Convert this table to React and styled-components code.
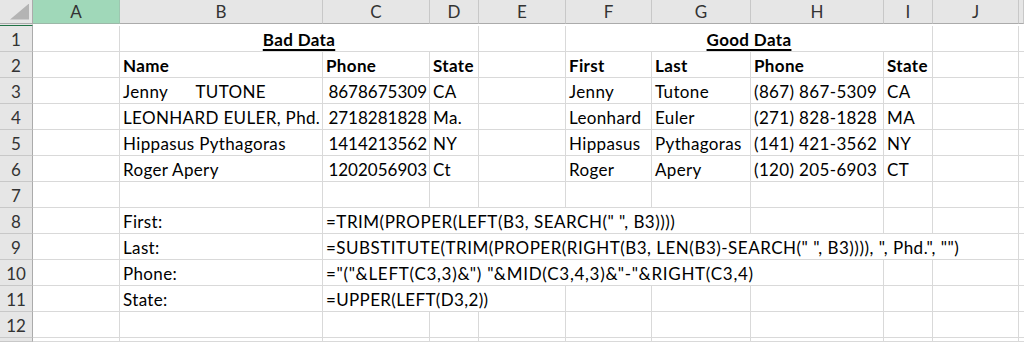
import React from "react";
import styled, { createGlobalStyle } from "styled-components";

const TEMPLATE =
  "33px 87px 203px 107px 49px 87px 86px 99px 133px 49px 86px 1fr";
const LETTERS = ["A", "B", "C", "D", "E", "F", "G", "H", "I", "J", ""];
const FONT = `Lato, "Open Sans", "Liberation Sans", sans-serif`;

const GlobalStyle = createGlobalStyle`
  html, body {
    margin: 0;
    padding: 0;
    overflow: hidden;
    background: #ffffff;
  }
  body {
    font-family: ${FONT};
  }
`;

// one entry per cell after the row number; span = columns covered,
// track = letter spacing so the formula runs as far as in the sheet
const ROWS = [
  [
    {},
    { text: "Bad Data", span: 3, align: "center", bold: true, under: true },
    {},
    { text: "Good Data", span: 4, align: "center", bold: true, under: true },
    {},
    {},
  ],
  [
    {},
    { text: "Name", bold: true },
    { text: "Phone", bold: true },
    { text: "State", bold: true },
    {},
    { text: "First", bold: true },
    { text: "Last", bold: true },
    { text: "Phone", bold: true },
    { text: "State", bold: true },
    {},
    {},
  ],
  [
    {},
    { text: "Jenny      TUTONE" },
    { text: "8678675309", align: "right" },
    { text: "CA" },
    {},
    { text: "Jenny" },
    { text: "Tutone" },
    { text: "(867) 867-5309" },
    { text: "CA" },
    {},
    {},
  ],
  [
    {},
    { text: "LEONHARD EULER, Phd." },
    { text: "2718281828", align: "right" },
    { text: "Ma." },
    {},
    { text: "Leonhard" },
    { text: "Euler" },
    { text: "(271) 828-1828" },
    { text: "MA" },
    {},
    {},
  ],
  [
    {},
    { text: "Hippasus Pythagoras" },
    { text: "1414213562", align: "right" },
    { text: "NY" },
    {},
    { text: "Hippasus" },
    { text: "Pythagoras" },
    { text: "(141) 421-3562" },
    { text: "NY" },
    {},
    {},
  ],
  [
    {},
    { text: "Roger Apery" },
    { text: "1202056903", align: "right" },
    { text: "Ct" },
    {},
    { text: "Roger" },
    { text: "Apery" },
    { text: "(120) 205-6903" },
    { text: "CT" },
    {},
    {},
  ],
  [{}, {}, {}, {}, {}, {}, {}, {}, {}, {}, {}],
  [
    {},
    { text: "First:" },
    {
      text: '=TRIM(PROPER(LEFT(B3, SEARCH(" ", B3))))',
      span: 5,
      track: 0.5,
    },
    {},
    {},
    {},
    {},
  ],
  [
    {},
    { text: "Last:" },
    {
      text: '=SUBSTITUTE(TRIM(PROPER(RIGHT(B3, LEN(B3)-SEARCH(" ", B3)))), ", Phd.", "")',
      span: 8,
      track: 0.5,
    },
    {},
  ],
  [
    {},
    { text: "Phone:" },
    {
      text: '="("&LEFT(C3,3)&") "&MID(C3,4,3)&"-"&RIGHT(C3,4)',
      span: 6,
      track: 0.72,
    },
    {},
    {},
    {},
  ],
  [
    {},
    { text: "State:" },
    { text: "=UPPER(LEFT(D3,2))", span: 3 },
    {},
    {},
    {},
    {},
    {},
    {},
  ],
  [{}, {}, {}, {}, {}, {}, {}, {}, {}, {}, {}],
];

const EMPTY = Array.from({ length: 11 }, () => ({}));

export default function App() {
  return (
    <>
      <GlobalStyle />
      <Sheet>
        <Row>
          <Corner />
          {LETTERS.map((l, i) => (
            <ColHead key={i} $selected={l === "A"}>
              {l}
            </ColHead>
          ))}
          <ColHead $edge />
        </Row>
        {ROWS.map((cells, r) => (
          <Row key={r}>
            <RowHead>{r + 1}</RowHead>
            {cells.map((c, i) => (
              <Cell
                key={i}
                $span={c.span || 1}
                $align={c.align || "left"}
                $bold={c.bold}
                $track={c.track}
              >
                {c.under ? <Underlined>{c.text}</Underlined> : c.text}
              </Cell>
            ))}
          </Row>
        ))}
        {/* top sliver of row 13 */}
        <Row $stub>
          <RowHead />
          {EMPTY.map((c, i) => (
            <Cell key={i} $span={1} />
          ))}
        </Row>
      </Sheet>
    </>
  );
}

const Sheet = styled.div`
  width: 1024px;
  height: 342px;
  overflow: hidden;
  background: #fff;
`;

const Row = styled.div`
  display: grid;
  grid-template-columns: ${TEMPLATE};
  height: ${(p) => (p.$stub ? "4px" : "26px")};
`;

const Corner = styled.div`
  position: relative;
  background: #e6e6e6;
  border-right: 1px solid #ababab;
  border-bottom: 1px solid #ababab;

  &::after {
    content: "";
    position: absolute;
    right: 3px;
    bottom: 3px;
    width: 19px;
    height: 16px;
    background: #b4b4b4;
    clip-path: polygon(100% 0, 100% 100%, 0 100%);
  }
`;

const ColHead = styled.div`
  display: flex;
  align-items: center;
  justify-content: center;
  padding-top: 1px;
  background: ${(p) => (p.$selected ? "#a0d8b9" : "#e6e6e6")};
  border-right: 1px solid ${(p) => (p.$selected ? "#9dc7b0" : "#c8c8c8")};
  border-bottom: 1px solid
    ${(p) => (p.$edge ? "#217346" : p.$selected ? "#9cb8a8" : "#ababab")};
  color: #333;
  font-size: 17px;
  box-sizing: border-box;
`;

const RowHead = styled.div`
  display: flex;
  align-items: center;
  justify-content: center;
  padding-top: 1px;
  background: #e6e6e6;
  border-right: 1px solid #ababab;
  border-bottom: 1px solid #c8c8c8;
  color: #333;
  font-size: 17px;
  box-sizing: border-box;
`;

const Cell = styled.div`
  grid-column: span ${(p) => p.$span};
  display: flex;
  align-items: flex-end;
  justify-content: ${(p) =>
    p.$align === "center"
      ? "center"
      : p.$align === "right"
      ? "flex-end"
      : "flex-start"};
  padding: 0 ${(p) => (p.$align === "right" ? "2px" : "3px")} 1px 3px;
  border-right: 1px solid #d9d9d9;
  border-bottom: 1px solid #d9d9d9;
  box-sizing: border-box;
  font-size: 17px;
  line-height: 20px;
  letter-spacing: ${(p) =>
    p.$track ? `${p.$track}px` : p.$align === "right" ? "0" : "0.35px"};
  font-weight: ${(p) => (p.$bold ? 700 : 400)};
  color: #000;
  white-space: pre;
  overflow: visible;
  min-width: 0;
`;

const Underlined = styled.span`
  text-decoration: underline;
  text-decoration-thickness: 2px;
  text-underline-offset: 3px;
`;
